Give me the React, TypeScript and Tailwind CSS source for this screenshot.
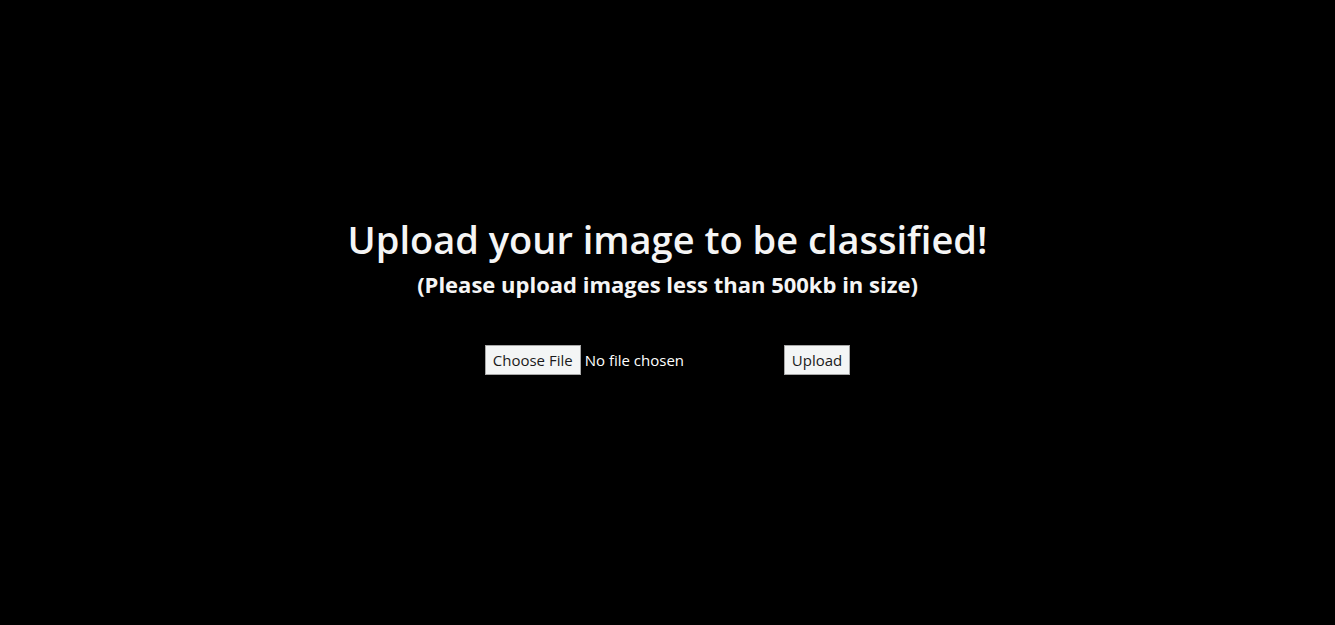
import React from "react";

export default function App() {
  return (
    <div className="w-[1335px] h-[625px] bg-black text-white flex flex-col items-center" style={{ fontFamily: '"Open Sans", "Noto Sans", sans-serif' }}>
      <h1 className="mt-[215px] text-[38px] leading-[48px] font-semibold text-[#f5f5f5]">Upload your image to be classified!</h1>
      <h2 className="mt-[6px] text-[22px] leading-[30px] font-bold text-[#f5f5f5]">(Please upload images less than 500kb in size)</h2>
      <div className="mt-[46px] flex items-center">
        <div className="w-[299px] flex items-center">
          <div className="h-[30px] px-[7px] flex items-center bg-[#f3f5f5] border border-[#a8a8a8] text-[#1a1a1a] text-[15px]">Choose File</div>
          <span className="ml-[4px] text-[15px] text-white">No file chosen</span>
        </div>
        <div className="h-[30px] px-[7px] flex items-center bg-[#f3f5f5] border border-[#a8a8a8] text-[#1a1a1a] text-[15px]">Upload</div>
      </div>
    </div>
  );
}
